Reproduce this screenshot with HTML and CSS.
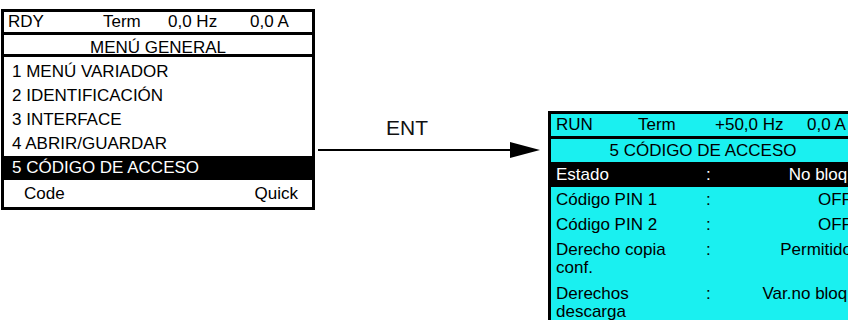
FILE: index.html
```html
<!DOCTYPE html>
<html lang="es">
<head>
<meta charset="utf-8">
<title>Código de acceso</title>
<link rel="stylesheet" href="styles.css">
</head>
<body>
<div class="diagram">
  <section class="panel panel-left">
    <div class="status status-left">
      <span>RDY</span><span>Term</span><span>0,0 Hz</span><span>0,0 A</span>
    </div>
    <div class="title title-left">MENÚ GENERAL</div>
    <ul class="menu">
      <li class="item">1 MENÚ VARIADOR</li>
      <li class="item">2 IDENTIFICACIÓN</li>
      <li class="item">3 INTERFACE</li>
      <li class="item">4 ABRIR/GUARDAR</li>
      <li class="item item-selected">5 CÓDIGO DE ACCESO</li>
    </ul>
    <div class="footer"><span>Code</span><span>Quick</span></div>
  </section>

  <div class="connector">
    <div class="ent">ENT</div>
    <svg class="arrow" width="233" height="20" viewBox="0 0 233 20">
      <line x1="3" y1="10" x2="200" y2="10" stroke="#000" stroke-width="2"/>
      <polygon points="195,2 225,10 195,18" fill="#000"/>
    </svg>
  </div>

  <section class="panel panel-right">
    <div class="status status-right">
      <span>RUN</span><span>Term</span><span>+50,0 Hz</span><span>0,0 A</span>
    </div>
    <div class="title title-right">5 CÓDIGO DE ACCESO</div>
    <div class="params">
      <div class="param param-selected"><span class="label">Estado</span><span class="colon">:</span><span class="value">No bloq.</span></div>
      <div class="param"><span class="label">Código PIN 1</span><span class="colon">:</span><span class="value">OFF</span></div>
      <div class="param"><span class="label">Código PIN 2</span><span class="colon">:</span><span class="value">OFF</span></div>
      <div class="param param-multi"><span class="label">Derecho copia conf.</span><span class="colon">:</span><span class="value">Permitido</span></div>
      <div class="param param-multi"><span class="label">Derechos descarga</span><span class="colon">:</span><span class="value">Var.no bloq.</span></div>
    </div>
  </section>
</div>
</body>
</html>
```

FILE: styles.css
```css
html, body {
  margin: 0;
  padding: 0;
  background: #ffffff;
}

body {
  width: 848px;
  height: 320px;
  overflow: hidden;
  font-family: "Liberation Sans", Arial, sans-serif;
  font-size: 17px;
  color: #000;
}

.diagram {
  display: flex;
  align-items: flex-start;
  padding: 9px 0 0 1px;
  width: 1000px;
}

.panel {
  flex-shrink: 0;
  border: 3px solid #000;
  box-sizing: border-box;
}

.panel-left {
  width: 314px;
  background: #fff;
}

.panel-right {
  width: 310px;
  margin-top: 102px;
  background: #1af0f0;
}

.status {
  display: grid;
  white-space: nowrap;
  border-bottom: 3px solid #000;
}

.status-left {
  grid-template-columns: 95px 65px 82px auto;
  height: 20px;
  line-height: 20px;
  padding-left: 4px;
}

.status-right {
  grid-template-columns: 82px 77px 92px auto;
  height: 22px;
  line-height: 22px;
  padding-left: 5px;
}

.title {
  text-align: center;
  white-space: nowrap;
}

.title-left {
  height: 22px;
  box-sizing: border-box;
  padding-top: 4px;
  line-height: 18px;
  border-bottom: 3px solid #000;
}

.title-right {
  height: 23px;
  line-height: 23px;
}

.menu {
  list-style: none;
  margin: 0;
  padding: 3px 0 0 0;
}

.item {
  height: 24px;
  line-height: 24px;
  padding-left: 8px;
  white-space: nowrap;
}

.item-selected {
  background: #000;
  color: #fff;
}

.footer {
  display: flex;
  justify-content: space-between;
  height: 27px;
  line-height: 27px;
  padding: 0 14px 0 20px;
}

.connector {
  flex-shrink: 0;
  width: 233px;
  margin-top: 108px;
}

.ent {
  height: 21px;
  line-height: 21px;
  font-size: 21px;
  padding-left: 71px;
  color: #111;
}

.arrow {
  display: block;
  margin-top: 2px;
}

.params {
  display: flex;
  flex-direction: column;
}

.param {
  display: grid;
  grid-template-columns: 140px auto 1fr;
  height: 25px;
  line-height: 25px;
  padding: 0 3px 0 5px;
  box-sizing: border-box;
}

.param-selected {
  background: #000;
  color: #fff;
}

.param-multi {
  height: 44px;
  line-height: 18px;
  padding-top: 4px;
  padding-bottom: 4px;
}

.colon {
  padding-left: 10px;
}

.value {
  text-align: right;
  white-space: nowrap;
}
```
